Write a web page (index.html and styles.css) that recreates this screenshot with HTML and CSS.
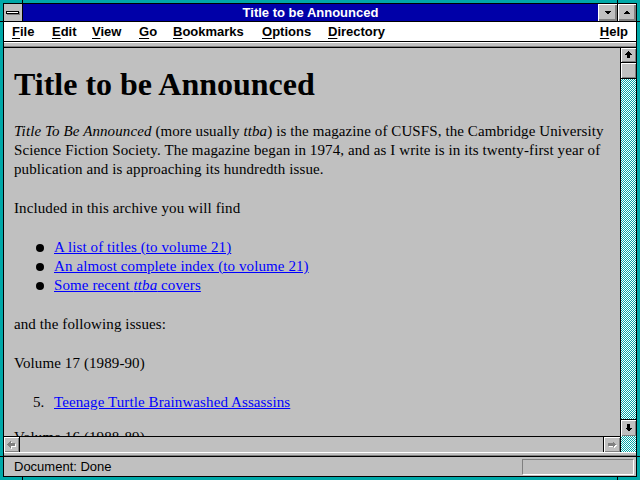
FILE: index.html
```html
<!DOCTYPE html>
<html>
<head>
<meta charset="utf-8">
<link rel="stylesheet" href="styles.css">
</head>
<body>
<div class="frame">
  <div class="win">
    <div class="titlebar">
      <div class="sysbox"><div class="dash"></div></div>
      <div class="title">Title to be Announced</div>
      <div class="capbtn minbtn">
        <svg width="19" height="17" viewBox="0 0 19 17" shape-rendering="crispEdges"><path d="M6 7H13L9.5 10.5Z" fill="#000"/></svg>
      </div>
      <div class="capbtn maxbtn">
        <svg width="18" height="17" viewBox="0 0 18 17" shape-rendering="crispEdges"><path d="M5.5 10H12.5L9 6.5Z" fill="#000"/></svg>
      </div>
    </div>
    <div class="menubar">
      <span class="mi w-file"><u>F</u>ile</span>
      <span class="mi w-edit"><u>E</u>dit</span>
      <span class="mi w-view"><u>V</u>iew</span>
      <span class="mi w-go"><u>G</u>o</span>
      <span class="mi w-book"><u>B</u>ookmarks</span>
      <span class="mi w-opt"><u>O</u>ptions</span>
      <span class="mi"><u>D</u>irectory</span>
      <span class="mi help"><u>H</u>elp</span>
    </div>
    <div class="strip1"></div>
    <div class="main">
      <div class="page">
        <h1>Title to be Announced</h1>
        <p><i>Title To Be Announced</i> (more usually <i>ttba</i>) is the magazine of CUSFS, the Cambridge University<br>Science Fiction Society. The magazine began in 1974, and as I write is in its twenty-first year of<br>publication and is approaching its hundredth issue.</p>
        <p>Included in this archive you will find</p>
        <ul class="bullets">
          <li><a href="#">A list of titles (to volume 21)</a></li>
          <li><a href="#">An almost complete index (to volume 21)</a></li>
          <li><a href="#">Some recent <i>ttba</i> covers</a></li>
        </ul>
        <p>and the following issues:</p>
        <p>Volume 17 (1989-90)</p>
        <ol class="issues">
          <li><span class="num">5.</span><a href="#">Teenage Turtle Brainwashed Assassins</a></li>
        </ol>
        <p>Volume 16 (1988-89)</p>
      </div>
      <div class="vscroll">
        <div class="vbtn up">
          <svg width="15" height="14" viewBox="0 0 15 14" shape-rendering="crispEdges"><path d="M7.5 3L11 6.5H9V10H6V6.5H4Z" fill="#000"/></svg>
        </div>
        <div class="thumb"></div>
        <div class="track"></div>
        <div class="vbtn down">
          <svg width="15" height="16" viewBox="0 0 15 16" shape-rendering="crispEdges"><path d="M6 4H9V8H11L7.5 11.5L4 8H6Z" fill="#000"/></svg>
        </div>
      </div>
      <div class="hscroll">
        <div class="hbtn left">
          <svg width="15" height="15" viewBox="0 0 15 15" shape-rendering="crispEdges"><path d="M4 8.5L7.5 5V7H12V10H7.5V12Z" fill="#fff"/><path d="M3 7.5L6.5 4V6H11V9H6.5V11Z" fill="#808080"/></svg>
        </div>
        <div class="htrack"></div>
        <div class="hbtn right">
          <svg width="16" height="15" viewBox="0 0 16 15" shape-rendering="crispEdges"><path d="M13 8.5L9.5 5V7H5V10H9.5V12Z" fill="#fff"/><path d="M12 7.5L8.5 4V6H4V9H8.5V11Z" fill="#808080"/></svg>
        </div>
      </div>
      <div class="corner"></div>
    </div>
    <div class="strip2"></div>
    <div class="status">
      <span class="stext">Document: Done</span>
      <span class="sbox"></span>
    </div>
  </div>
  <div class="mark mt1"></div>
  <div class="mark mt2"></div>
  <div class="mark mb1"></div>
  <div class="mark mb2"></div>
  <div class="mark ml1"></div>
  <div class="mark ml2"></div>
  <div class="mark mr1"></div>
  <div class="mark mr2"></div>
</div>
</body>
</html>
```

FILE: styles.css
```css
html, body {
  margin: 0;
  padding: 0;
  background: #00a8a8;
}

.frame {
  position: relative;
  width: 640px;
  height: 480px;
  box-sizing: border-box;
  padding: 3px;
  background: #00a8a8;
}

.win {
  height: 474px;
  box-sizing: border-box;
  border: 1px solid #000;
  display: flex;
  flex-direction: column;
  background: #c0c0c0;
  font-family: "Liberation Sans", Arial, sans-serif;
}

/* title bar */
.titlebar {
  height: 17px;
  border-bottom: 1px solid #000;
  background: #0000a8;
  display: flex;
  flex: none;
}

.sysbox {
  width: 18px;
  height: 17px;
  background: #c0c0c0;
  border-right: 1px solid #000;
  display: flex;
  align-items: center;
  justify-content: center;
}

.dash {
  width: 11px;
  height: 1px;
  background: #fff;
  border: 1px solid #000;
  box-shadow: 1px 1px 0 #808080;
  margin-right: 1px;
}

.title {
  flex: 1;
  text-align: center;
  color: #fff;
  font-weight: bold;
  font-size: 13px;
  line-height: 17px;
}

.capbtn {
  height: 17px;
  background: #c0c0c0;
  box-shadow: inset 1px 1px 0 #fff, inset -1px -1px 0 #808080, inset -2px -2px 0 #808080;
}

.capbtn svg {
  display: block;
}

.minbtn {
  width: 19px;
}

.maxbtn {
  width: 18px;
  border-left: 1px solid #000;
}

/* menu bar */
.menubar {
  height: 19px;
  background: #fff;
  border-bottom: 1px solid #000;
  display: flex;
  flex: none;
  padding-left: 8px;
  padding-right: 8px;
  font-size: 13px;
  font-weight: bold;
  line-height: 19px;
  color: #000;
}

.mi u {
  text-decoration: underline;
  text-underline-offset: 2px;
}

.w-file { width: 40px; }
.w-edit { width: 40px; }
.w-view { width: 47px; }
.w-go { width: 34px; }
.w-book { width: 89px; }
.w-opt { width: 66px; }

.help {
  margin-left: auto;
}

.strip1 {
  height: 3px;
  flex: none;
  background: #c0c0c0;
  border-top: 1px solid #fff;
  border-bottom: 1px solid #808080;
}

/* main area */
.main {
  flex: none;
  border-top: 1px solid #000;
  display: grid;
  grid-template-columns: 616px 16px;
  grid-template-rows: 388px 16px;
}

.page {
  background: #c0c0c0;
  overflow: hidden;
  padding: 18px 0 0 10px;
  font-family: "Liberation Serif", "Times New Roman", serif;
  font-size: 15px;
  line-height: 19px;
  letter-spacing: 0.1px;
  color: #000;
  white-space: nowrap;
}

.page h1 {
  font-size: 32px;
  line-height: 36px;
  font-weight: bold;
  margin: 0 0 20px 0;
  letter-spacing: 0;
}

.page p {
  margin: 0 0 20px 0;
}

.page a {
  color: #0000ff;
  text-decoration: underline;
}

.bullets {
  list-style: none;
  margin: 0 0 20px 0;
  padding-left: 22px;
}

.bullets li {
  display: flex;
  align-items: center;
}

.bullets li::before {
  content: "";
  width: 8px;
  height: 8px;
  border-radius: 50%;
  background: #000;
  margin-right: 10px;
  flex: none;
}

.issues {
  list-style: none;
  margin: 0 0 16px 0;
  padding-left: 19px;
}

.issues li {
  display: flex;
}

.num {
  width: 21px;
  flex: none;
}

/* vertical scrollbar */
.vscroll {
  border-left: 1px solid #000;
  display: flex;
  flex-direction: column;
}

.vbtn, .thumb, .hbtn {
  background: #c0c0c0;
  box-shadow: inset 1px 1px 0 #fff, inset -1px -1px 0 #808080;
}

.vbtn svg, .hbtn svg {
  display: block;
}

.vbtn.up {
  height: 14px;
  border-bottom: 1px solid #000;
}

.thumb {
  height: 15px;
  border-bottom: 1px solid #000;
}

.track {
  flex: 1;
  background: repeating-conic-gradient(#00a8a8 0% 25%, #ffffff 0% 50%) 0 0 / 2px 2px;
}

.vbtn.down {
  height: 16px;
  border-top: 1px solid #000;
}

/* horizontal scrollbar */
.hscroll {
  border-top: 1px solid #000;
  display: flex;
}

.hbtn.left {
  width: 15px;
  border-right: 1px solid #000;
}

.htrack {
  flex: 1;
  background: #c0c0c0;
}

.hbtn.right {
  width: 16px;
  border-left: 1px solid #000;
}

.corner {
  border-left: 1px solid #000;
  background: repeating-conic-gradient(#00a8a8 0% 25%, #ffffff 0% 50%) 0 0 / 2px 2px;
}

.strip2 {
  height: 2px;
  flex: none;
  background: #c0c0c0;
  border-top: 1px solid #fff;
  border-bottom: 1px solid #808080;
}

/* status bar */
.status {
  flex: none;
  height: 19px;
  border-top: 1px solid #000;
  display: flex;
  align-items: center;
  padding-left: 10px;
  font-size: 13px;
  color: #000;
}

.sbox {
  margin-left: auto;
  margin-right: 2px;
  width: 110px;
  height: 14px;
  border-top: 1px solid #808080;
  border-left: 1px solid #808080;
  border-bottom: 1px solid #fff;
  border-right: 1px solid #fff;
}

/* frame corner marks */
.mark {
  position: absolute;
  background: #000;
}

.mt1, .mt2, .mb1, .mb2 {
  width: 1px;
  height: 3px;
}

.mt1 { left: 22px; top: 0; }
.mt2 { left: 617px; top: 0; }
.mb1 { left: 22px; bottom: 0; }
.mb2 { left: 617px; bottom: 0; }

.ml1, .ml2, .mr1, .mr2 {
  width: 3px;
  height: 1px;
}

.ml1 { left: 0; top: 21px; }
.ml2 { left: 0; top: 456px; }
.mr1 { right: 0; top: 21px; }
.mr2 { right: 0; top: 456px; }
```
